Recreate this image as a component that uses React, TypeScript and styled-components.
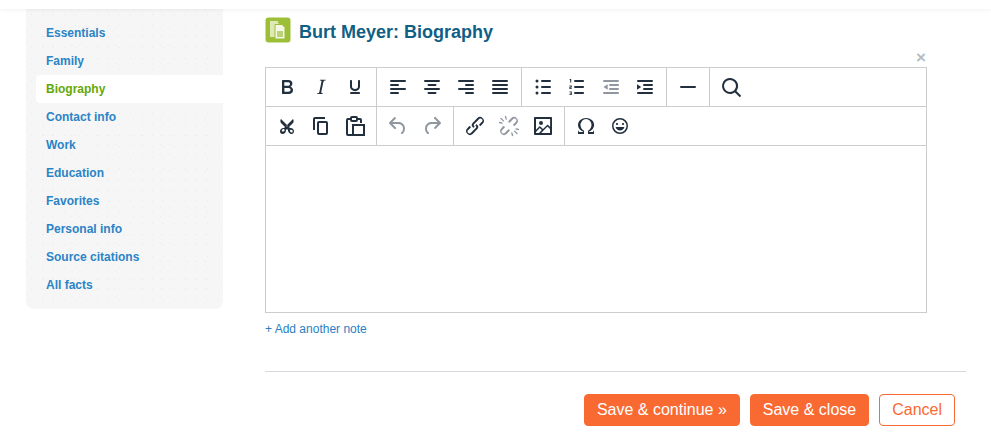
import React from 'react'
import styled, { createGlobalStyle, css } from 'styled-components'

const GlobalStyle = createGlobalStyle`
    html, body {
        margin: 0;
        padding: 0;
        background: #fff;
        font-family: "Liberation Sans", Arial, sans-serif;
    }
`

const navItems = [
    'Essentials',
    'Family',
    'Biography',
    'Contact info',
    'Work',
    'Education',
    'Favorites',
    'Personal info',
    'Source citations',
    'All facts',
]

const lines = (rows: [number, number][]) =>
    rows.map(([x, w], i) => <rect key={i} x={x} y={5 + i * 4} width={w} height="2" rx="1" />)

const Dots = () => (
    <>
        <circle cx="6" cy="6" r="1.5" />
        <circle cx="6" cy="12" r="1.5" />
        <circle cx="6" cy="18" r="1.5" />
    </>
)

const unlinkTicks = 'M4 4.5l2.4 2.4M8.5 2.5l.7 2.6M2.5 8.5l2.6.7M20 19.5l-2.4-2.4M15.5 21.5l-.7-2.6M21.5 15.5l-2.6-.7'

const icons: Record<string, React.ReactNode> = {
    bold: <path d="M7.8 19c-.3 0-.5 0-.6-.2l-.2-.5V5.7c0-.2 0-.4.2-.5l.6-.2h5c1.5 0 2.7.3 3.5 1 .7.6 1.1 1.4 1.1 2.5a3 3 0 0 1-.6 1.9c-.4.6-1 1-1.6 1.2.4.1.9.3 1.3.6s.8.7 1 1.2c.4.4.5 1 .5 1.6 0 1.3-.4 2.3-1.3 3-.8.7-2.1 1-3.8 1H7.8zm5-8.3c.6 0 1.2-.1 1.6-.5.4-.3.6-.7.6-1.3 0-1.1-.8-1.7-2.3-1.7H9.3v3.5h3.4zm.5 6c.7 0 1.3-.1 1.7-.4.4-.4.6-.9.6-1.5s-.2-1-.7-1.4c-.4-.3-1-.4-2-.4H9.4v3.8h4z" />,
    italic: <path d="M16.7 4.7l-.1.9h-.3c-.6 0-1 0-1.4.3-.3.3-.4.6-.5 1.1l-2.1 9.8v.6c0 .5.4.8 1.4.8h.2l-.2.8H8l.2-.8h.2c1.1 0 1.8-.5 2-1.5l2-9.8.1-.5c0-.6-.4-.8-1.4-.8h-.3l.2-.9h5.8z" />,
    underline: <path d="M16 5c.6 0 1 .4 1 1v5.5a4 4 0 0 1-.4 1.8l-1 1.4a5.3 5.3 0 0 1-5.5 1 5 5 0 0 1-1.6-1c-.5-.4-.8-.9-1.1-1.4a4 4 0 0 1-.4-1.8V6c0-.6.4-1 1-1s1 .4 1 1v5.5c0 .3 0 .6.2 1l.6.7a3.3 3.3 0 0 0 2.2.8 3.4 3.4 0 0 0 2.2-.8c.3-.2.4-.5.6-.8l.2-.9V6c0-.6.4-1 1-1zM8 17h8c.6 0 1 .4 1 1s-.4 1-1 1H8a1 1 0 0 1 0-2z" />,
    alignLeft: lines([[4, 16], [4, 9], [4, 16], [4, 9]]),
    alignCenter: lines([[4, 16], [7.5, 9], [4, 16], [7.5, 9]]),
    alignRight: lines([[4, 16], [11, 9], [4, 16], [11, 9]]),
    justify: lines([[4, 16], [4, 16], [4, 16], [4, 16]]),
    bullets: (
        <>
            <Dots />
            <rect x="10" y="5" width="10" height="2" rx="1" />
            <rect x="10" y="11" width="10" height="2" rx="1" />
            <rect x="10" y="17" width="10" height="2" rx="1" />
        </>
    ),
    numbers: (
        <>
            <path d="M10 17h8c.6 0 1 .4 1 1s-.4 1-1 1h-8a1 1 0 0 1 0-2zm0-6h8c.6 0 1 .4 1 1s-.4 1-1 1h-8a1 1 0 0 1 0-2zm0-6h8c.6 0 1 .4 1 1s-.4 1-1 1h-8a1 1 0 1 1 0-2z" />
            <path d="M5 4h1.2v3.6h-1V5H4.4zM4.4 10.4h2.4v2.2H5.4v.6h1.4v.8H4.4v-2.2h1.4v-.6H4.400zM4.400 16.400h2.400v3.600H4.400v-.8h1.400v-.7H4.800v-.6h1v-.7H4.400z" />
        </>
    ),
    outdent: (
        <>
            <rect x="4" y="5" width="16" height="2" rx="1" />
            <rect x="10" y="9" width="10" height="2" rx="1" />
            <rect x="10" y="13" width="10" height="2" rx="1" />
            <rect x="4" y="17" width="16" height="2" rx="1" />
            <path d="M8.700 9.200v5.600L4.500 12z" />
        </>
    ),
    indent: (
        <>
            <rect x="4" y="5" width="16" height="2" rx="1" />
            <rect x="10" y="9" width="10" height="2" rx="1" />
            <rect x="10" y="13" width="10" height="2" rx="1" />
            <rect x="4" y="17" width="16" height="2" rx="1" />
            <path d="M4 9.200v5.600L8.200 12z" />
        </>
    ),
    hr: <rect x="4" y="11" width="16" height="2" rx="1" />,
    search: <path d="M16 17.300a8 8 0 1 1 1.400-1.400l4.300 4.400a1 1 0 0 1-1.400 1.400l-4.400-4.300zm-5-.3a6 6 0 1 0 0-12 6 6 0 0 0 0 12z" />,
    cut: <path d="M18 15c.6.7 1 1.400 1 2.300 0 .8-.2 1.500-.7 2l-.8.5-1 .2c-.4 0-.8 0-1.200-.3a3.900 3.900 0 0 1-2.100-2.200c-.2-.5-.3-1-.2-1.500l-1-1-1 1c0 .5 0 1-.2 1.500-.1.5-.4 1-.9 1.400-.3.4-.7.6-1.200.8l-1.200.3c-.4 0-.7 0-1-.2-.3 0-.6-.3-.8-.5-.5-.5-.8-1.200-.7-2 0-.9.4-1.600 1-2.200A3.700 3.700 0 0 1 8.600 14H9l1-1-4-4-.5-1a3.300 3.300 0 0 1 0-2c0-.4.3-.7.5-1l6 6 6-6 .5 1a3.300 3.300 0 0 1 0 2c0 .4-.3.7-.5 1l-4 4 1 1h.5c.4 0 .9 0 1.300.3.5.2.9.4 1.200.7zm-8.500 2.200l.1-.4v-.7a1 1 0 0 0-.2-.5l-.4-.3-.4-.2a1.800 1.800 0 0 0-.9.2l-.4.3-.3.4a2.300 2.300 0 0 0-.2.9v.4l.2.3h.8l.5-.1.500-.2.400-.2.200-.4zM12 12.500c.1 0 .2 0 .4-.2l.1-.3-.1-.4-.4-.1-.4.1-.1.4.1.3.4.2zm5.400 5.500l.2-.3v-.9l-.3-.5-.3-.3a1.800 1.800 0 0 0-1-.3h-.4l-.3.1-.2.4v.7l.1.5.2.5.4.3.5.2.5.1h.5l.1-.3z" />,
    copy: <path d="M16 3H6a2 2 0 0 0-2 2v11h2V5h10V3zm1 4a2 2 0 0 1 2 2v10a2 2 0 0 1-2 2h-7a2 2 0 0 1-2-2V9c0-1.200.9-2 2-2h7zm0 12V9h-7v10h7z" />,
    paste: (
        <g fill="none" stroke="currentColor" strokeWidth="2">
            <path d="M10 21H5a1 1 0 0 1-1-1V6a1 1 0 0 1 1-1h12a1 1 0 0 1 1 1v3" />
            <rect x="8" y="3" width="6" height="4" rx="1" fill="#fff" />
            <rect x="10" y="11" width="11" height="10" />
        </g>
    ),
    undo: <path d="M6.400 8H12c3.700 0 6.200 2 6.800 5.100.6 2.700-.4 5.600-2.300 6.800a1 1 0 0 1-1-1.800c1.100-.6 1.800-2.700 1.400-4.600-.5-2.100-2.100-3.500-4.900-3.500H6.400l3.300 3.300a1 1 0 1 1-1.400 1.400l-5-5a1 1 0 0 1 0-1.400l5-5a1 1 0 0 1 1.400 1.400L6.400 8z" />,
    redo: <path d="M17.600 10H12c-2.800 0-4.400 1.400-4.900 3.500-.4 2 .3 4 1.400 4.600a1 1 0 1 1-1 1.800c-2-1.200-2.900-4.100-2.300-6.800.6-3 3-5.100 6.800-5.100h5.600l-3.300-3.300a1 1 0 1 1 1.400-1.400l5 5a1 1 0 0 1 0 1.400l-5 5a1 1 0 0 1-1.400-1.400l3.300-3.300z" />,
    link: <path d="M6.200 12.300a1 1 0 0 1 1.400 1.400l-2 2a2 2 0 1 0 2.600 2.800l4.800-4.800a1 1 0 0 0 0-1.400 1 1 0 1 1 1.400-1.300 2.900 2.900 0 0 1 0 4L9.600 20a3.900 3.900 0 0 1-5.500-5.500l2-2.200zm11.600-.6a1 1 0 0 1-1.400-1.400l2-2a2 2 0 1 0-2.600-2.800L11 10.300a1 1 0 0 0 0 1.400 1 1 0 1 1-1.400 1.300 2.900 2.900 0 0 1 0-4L14.400 4a3.900 3.900 0 0 1 5.500 5.500l-2.100 2.200z" />,
    unlink: (
        <>
            <path d="M6.200 12.300a1 1 0 0 1 1.400 1.400l-2 2a2 2 0 1 0 2.600 2.800l2.900-2.900a1 1 0 0 1 1.400 1.400L9.600 20a3.900 3.900 0 0 1-5.500-5.500l2-2.200zm11.600-.6a1 1 0 0 1-1.400-1.400l2-2a2 2 0 1 0-2.600-2.800l-2.900 2.900a1 1 0 0 1-1.400-1.400L14.400 4a3.900 3.900 0 0 1 5.500 5.500l-2.100 2.200z" />
            <path d={unlinkTicks} fill="none" stroke="currentColor" strokeWidth="1.300" strokeLinecap="round" />
        </>
    ),
    image: <path d="M5 15.700l3.300-3.200c.3-.3.7-.3 1 0L12 15l4.100-4c.3-.4.8-.4 1 0l2 1.900V5H5v10.700zM5 18v1h3l2.800-2.900-2-2L5 17.900zm14-3l-2.500-2.400-6.400 6.500H19v-4.100zM4 3h16c.6 0 1 .4 1 1v16c0 .6-.4 1-1 1H4a1 1 0 0 1-1-1V4c0-.6.4-1 1-1zm6 8a2 2 0 1 1 0-4 2 2 0 0 1 0 4z" />,
    omega: <path d="M15 18h4l1-2v4h-6v-3.300l1.400-1a6 6 0 0 0 1.800-2.900 6.300 6.300 0 0 0-.1-4.100 5.800 5.800 0 0 0-3-3.200c-.6-.3-1.300-.5-2.100-.5a5.100 5.100 0 0 0-3.900 1.800 6.300 6.300 0 0 0-1.300 6 6.200 6.200 0 0 0 1.800 3l1.400.9V20H4v-4l1 2h4v-.5l-2-1L5.400 15A6.500 6.500 0 0 1 4 11c0-1 .2-1.900.6-2.700A7 7 0 0 1 6.300 6C7.100 5.400 8 5 9 4.500c1-.3 2-.5 3.100-.5a8.800 8.800 0 0 1 5.700 2 7 7 0 0 1 1.700 2.300 6 6 0 0 1 .2 4.800c-.2.7-.6 1.300-1 1.900a7.600 7.600 0 0 1-3.600 2.500v.5z" />,
    emoji: <path d="M9 11c.6 0 1-.4 1-1s-.4-1-1-1-1 .4-1 1 .4 1 1 1zm6 0c.6 0 1-.4 1-1s-.4-1-1-1-1 .4-1 1 .4 1 1 1zm-3 5.500c2.100 0 4-1.500 4.400-3.500H7.600c.5 2 2.300 3.500 4.400 3.500zM12 4a8 8 0 1 0 0 16 8 8 0 0 0 0-16zm0 14.500a6.500 6.500 0 1 1 0-13 6.500 6.500 0 0 1 0 13z" />,
}

const toolbarRows: { name: string; disabled?: boolean }[][][] = [
    [
        [{ name: 'bold' }, { name: 'italic' }, { name: 'underline' }],
        [{ name: 'alignLeft' }, { name: 'alignCenter' }, { name: 'alignRight' }, { name: 'justify' }],
        [{ name: 'bullets' }, { name: 'numbers' }, { name: 'outdent', disabled: true }, { name: 'indent' }],
        [{ name: 'hr' }],
        [{ name: 'search' }],
    ],
    [
        [{ name: 'cut' }, { name: 'copy' }, { name: 'paste' }],
        [{ name: 'undo', disabled: true }, { name: 'redo', disabled: true }],
        [{ name: 'link' }, { name: 'unlink', disabled: true }, { name: 'image' }],
        [{ name: 'omega' }, { name: 'emoji' }],
    ],
]

const App: React.FC = () => {
    return (
        <>
            <GlobalStyle />
            <Page>
                <TopBar />
                <Content>
                    <Sidebar>
                        {navItems.map(item => (
                            <NavItem key={item} $active={item === 'Biography'}>{item}</NavItem>
                        ))}
                    </Sidebar>
                    <Main>
                        <Heading>
                            <Badge viewBox="0 0 26 26" aria-hidden="true">
                                <rect x="0.5" y="0.5" width="25" height="25" rx="3" fill="#9dbf38" />
                                <path d="M5 4h8v2l3 2v12H5z" fill="#dfe9b8" />
                                <path d="M10 7.500h7l3 3V22H10z" fill="#f4f7e4" stroke="#9dbf38" />
                                <rect x="12" y="14" width="6" height="6" fill="#bcd27a" />
                            </Badge>
                            <Title>Burt Meyer: Biography</Title>
                        </Heading>
                        <CloseRow>
                            <CloseMark>×</CloseMark>
                        </CloseRow>
                        <Editor>
                            {toolbarRows.map((groups, r) => (
                                <Toolbar key={r}>
                                    {groups.map((group, g) => (
                                        <ToolGroup key={g}>
                                            {group.map(tool => (
                                                <ToolButton key={tool.name} $disabled={tool.disabled}>
                                                    <svg viewBox="0 0 24 24" width="24" height="24" fill="currentColor">
                                                        {icons[tool.name]}
                                                    </svg>
                                                </ToolButton>
                                            ))}
                                        </ToolGroup>
                                    ))}
                                </Toolbar>
                            ))}
                            <EditArea />
                        </Editor>
                        <AddNote>+ Add another note</AddNote>
                        <Divider />
                        <Actions>
                            <Button>Save &amp; continue »</Button>
                            <Button>Save &amp; close</Button>
                            <Button $outline>Cancel</Button>
                        </Actions>
                    </Main>
                </Content>
            </Page>
        </>
    )
}

export default App

const Page = styled.div`
    width: 991px;
    height: 445px;
    overflow: hidden;
    background: #fff;
`

const TopBar = styled.div`
    position: relative;
    z-index: 1;
    height: 9px;
    background: #fff;
    box-shadow: 0 1px 4px rgba(0, 0, 0, 0.06);
`

const Content = styled.div`
    display: flex;
    align-items: flex-start;
    padding-left: 26px;
`

const Sidebar = styled.nav`
    width: 197px;
    height: 300px;
    box-sizing: border-box;
    padding: 10px 0 0 10px;
    background-color: #f6f6f6;
    background-image:
        radial-gradient(rgba(255, 190, 205, 0.35) 0.6px, transparent 0.8px),
        radial-gradient(rgba(190, 225, 235, 0.3) 0.6px, transparent 0.8px);
    background-size: 11px 11px, 9px 9px;
    background-position: 0 0, 4px 5px;
    border-radius: 0 0 8px 8px;
`

const NavItem = styled.div<{ $active?: boolean }>`
    height: 28px;
    line-height: 28px;
    padding-left: 10px;
    font-size: 12px;
    font-weight: bold;
    color: #2a84c6;
    ${props => props.$active && css`
        color: #64a70b;
        background: #fff;
        border-radius: 4px 0 0 4px;
    `}
`

const Main = styled.main`
    width: 701px;
    margin-left: 42px;
`

const Heading = styled.div`
    display: flex;
    align-items: center;
    gap: 8px;
    height: 26px;
    margin-top: 8px;
`

const Badge = styled.svg`
    width: 26px;
    height: 26px;
    flex: none;
`

const Title = styled.h1`
    margin: 4px 0 0;
    font-size: 18px;
    font-weight: bold;
    color: #105f86;
`

const CloseRow = styled.div`
    display: flex;
    justify-content: flex-end;
    width: 662px;
    height: 17px;
    margin-top: 7px;
`

const CloseMark = styled.span`
    width: 11px;
    font-size: 17px;
    line-height: 15px;
    font-weight: bold;
    color: #b4bcc3;
`

const Editor = styled.div`
    width: 662px;
    height: 246px;
    box-sizing: border-box;
    border: 1px solid #cccccc;
    display: flex;
    flex-direction: column;
`

const Toolbar = styled.div`
    display: flex;
    height: 39px;
    flex: none;
    box-sizing: border-box;
    border-bottom: 1px solid #cccccc;
`

const ToolGroup = styled.div`
    display: flex;
    align-items: center;
    padding: 0 4px;
    border-right: 1px solid #cccccc;
    &:last-child {
        border-right: none;
    }
`

const ToolButton = styled.span<{ $disabled?: boolean }>`
    display: flex;
    align-items: center;
    justify-content: center;
    width: 34px;
    height: 34px;
    color: #222f3e;
    ${props => props.$disabled && css`
        color: rgba(34, 47, 62, 0.5);
    `}
`

const EditArea = styled.div`
    flex: 1;
`

const AddNote = styled.a`
    display: block;
    margin-top: 9px;
    font-size: 12px;
    line-height: 14px;
    color: #2a7fc4;
`

const Divider = styled.hr`
    height: 1px;
    margin: 35px 0 0;
    border: none;
    background: #d6d8de;
`

const Actions = styled.div`
    display: flex;
    justify-content: flex-end;
    gap: 10px;
    margin-top: 22px;
    padding-right: 11px;
`

const Button = styled.button<{ $outline?: boolean }>`
    height: 32px;
    padding: 0 12px;
    font-family: "Liberation Sans", Arial, sans-serif;
    font-size: 16px;
    color: #fff;
    background: #f96a33;
    border: 1px solid #f96a33;
    border-radius: 4px;
    ${props => props.$outline && css`
        color: #f96a33;
        background: #fff;
    `}
`
